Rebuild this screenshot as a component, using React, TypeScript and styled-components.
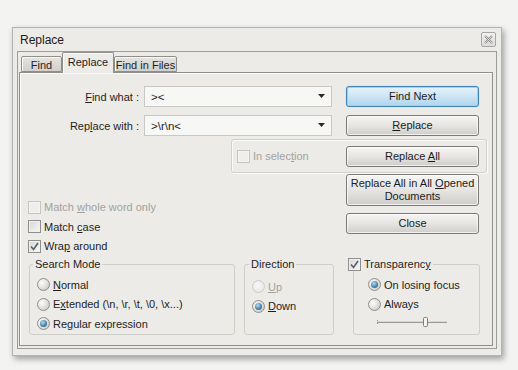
import React from "react";
import styled, { createGlobalStyle } from "styled-components";

const Global = createGlobalStyle`
  html, body { margin: 0; padding: 0; background: #f3f3f2; }
  body { font-family: "Liberation Sans", Arial, sans-serif; font-size: 11px; color: #1e1e1e; }
  * { box-sizing: border-box; }
  u { text-decoration-thickness: 1px; text-underline-offset: 1px; }
`;

const Page = styled.div`
  width: 518px;
  height: 370px;
  padding: 27px 0 0 12px;
  overflow: hidden;
`;

const Window = styled.div`
  width: 490px;
  height: 329px;
  background: #ecebe7;
  border: 1px solid #b5b4b0;
  box-shadow: 2px 3px 6px rgba(0, 0, 0, 0.35);
  display: flex;
  flex-direction: column;
`;

const TitleBar = styled.div`
  height: 23px;
  display: flex;
  align-items: center;
  justify-content: space-between;
  padding: 0 5px 0 7px;
  font-size: 12px;
  color: #1a1a1a;
`;

const CloseBtn = styled.div`
  width: 15px;
  height: 15px;
  border: 1px solid #a6a6a6;
  border-radius: 2px;
  background: linear-gradient(#f1f1f0, #dcdbd8);
  display: flex;
  align-items: center;
  justify-content: center;
`;

const ClientFrame = styled.div`
  flex: 1;
  margin: 0 4px 6px 4px;
  border: 1px solid #9d9c98;
  padding: 0 3px 2px 1px;
  display: flex;
  flex-direction: column;
`;

const TabRow = styled.div`
  height: 20px;
  display: flex;
  align-items: flex-end;
  padding-left: 2px;
`;

const Tab = styled.div<{ $active?: boolean; $w: number }>`
  width: ${(p) => p.$w}px;
  height: ${(p) => (p.$active ? 21 : 16)}px;
  margin-bottom: ${(p) => (p.$active ? -1 : 0)}px;
  position: relative;
  z-index: ${(p) => (p.$active ? 2 : 1)};
  border: 1px solid #8f8e8b;
  border-bottom: ${(p) => (p.$active ? "none" : "1px solid #8f8e8b")};
  border-radius: 2px 2px 0 0;
  background: ${(p) =>
    p.$active ? "#ecebe7" : "linear-gradient(#e4e3e0, #d2d0cc)"};
  box-shadow: inset 1px 1px 0 #fafaf9;
  display: flex;
  align-items: center;
  justify-content: center;
  padding-bottom: ${(p) => (p.$active ? 2 : 0)}px;
  padding-top: ${(p) => (p.$active ? 0 : 1)}px;
  font-size: 11px;
`;

const Panel = styled.div`
  height: 274px;
  border: 1px solid #8f8e8b;
  box-shadow: inset 1px 1px 0 #fbfbfa;
  background: #ecebe7;
  padding-top: 13px;
  display: flex;
  flex-direction: column;
`;

const FieldRow = styled.div<{ $mt?: number }>`
  display: flex;
  align-items: center;
  height: 21px;
  margin-top: ${(p) => p.$mt ?? 0}px;
`;

const FieldLabel = styled.div`
  width: 119px;
  text-align: right;
  margin-right: 5px;
  white-space: nowrap;
`;

const Combo = styled.div`
  width: 188px;
  height: 21px;
  border: 1px solid #c9c8c4;
  background: #f7f7f5;
  display: flex;
  align-items: center;
  justify-content: space-between;
  padding: 0 5px 0 6px;
  font-size: 11.5px;
`;

const Button = styled.div<{ $default?: boolean; $h?: number; $mt?: number }>`
  width: 133px;
  height: ${(p) => p.$h ?? 21}px;
  margin-top: ${(p) => p.$mt ?? 0}px;
  flex-shrink: 0;
  border: 1px solid ${(p) => (p.$default ? "#3f84b6" : "#7b7a77")};
  border-radius: 3px;
  background: ${(p) =>
    p.$default
      ? "linear-gradient(#e6f2fa 0%, #cde5f4 50%, #aed4ec 100%)"
      : "linear-gradient(#f5f5f4 0%, #e6e5e2 50%, #cfcdc9 100%)"};
  box-shadow: ${(p) =>
    p.$default
      ? "inset 0 0 0 1px #9fd2f0, 0 0 1px #7fc3ec"
      : "inset 0 0 0 1px rgba(255,255,255,0.7)"};
  display: flex;
  align-items: center;
  justify-content: center;
  text-align: center;
  line-height: 13px;
  color: #1c1c1c;
`;

const ButtonSlot = styled.div`
  margin-left: 14px;
`;

const SelectionBox = styled.div`
  margin: 3px 0 0 211px;
  width: 256px;
  height: 34px;
  border: 1px solid #d2d0cb;
  border-radius: 3px;
  box-shadow: inset 1px 1px 0 #fafaf9, 1px 1px 0 #fafaf9;
  display: flex;
  align-items: center;
  justify-content: space-between;
  padding: 0 7px 0 5px;
`;

const Lower = styled.div`
  display: flex;
  justify-content: space-between;
  padding-right: 13px;
`;

const LeftChecks = styled.div`
  padding: 24px 0 0 8px;
  display: flex;
  flex-direction: column;
`;

const RightButtons = styled.div`
  display: flex;
  flex-direction: column;
`;

const CheckRow = styled.div<{ $disabled?: boolean; $h?: number }>`
  display: flex;
  align-items: center;
  height: ${(p) => p.$h ?? 19}px;
  gap: 3px;
  white-space: nowrap;
  color: ${(p) => (p.$disabled ? "#a3a29f" : "#1e1e1e")};
`;

const Box = styled.span<{ $disabled?: boolean }>`
  width: 13px;
  height: 13px;
  flex-shrink: 0;
  border: 1px solid ${(p) => (p.$disabled ? "#c6c5c2" : "#8e8f8f")};
  background: ${(p) =>
    p.$disabled ? "#efeeeb" : "linear-gradient(135deg, #d7d6d3, #f8f8f7)"};
  box-shadow: inset 0 0 0 1px ${(p) => (p.$disabled ? "#f4f3f1" : "#f1f0ee")};
  display: flex;
  align-items: center;
  justify-content: center;
`;

const Circle = styled.span<{ $disabled?: boolean }>`
  width: 13px;
  height: 13px;
  flex-shrink: 0;
  border-radius: 50%;
  border: 1px solid ${(p) => (p.$disabled ? "#cdccc9" : "#8f8f8e")};
  background: ${(p) =>
    p.$disabled
      ? "radial-gradient(circle at 40% 40%, #f8f8f7, #e3e2df)"
      : "radial-gradient(circle at 35% 35%, #ffffff, #d5d4d1 70%, #bdbcb9)"};
  display: flex;
  align-items: center;
  justify-content: center;
`;

const Dot = styled.span`
  width: 7px;
  height: 7px;
  border-radius: 50%;
  background: radial-gradient(circle at 40% 35%, #bcdcef, #3f7fa8 60%, #2b5d80);
`;

const Groups = styled.div`
  display: flex;
  margin-top: 2px;
  padding-left: 9px;
  align-items: flex-start;
`;

const Group = styled.fieldset<{ $w: number; $ml?: number; $pl: number; $pt: number }>`
  width: ${(p) => p.$w}px;
  height: 77px;
  margin: 0 0 0 ${(p) => p.$ml ?? 0}px;
  padding: ${(p) => p.$pt}px 0 0 ${(p) => p.$pl}px;
  border: 1px solid #d0cec9;
  border-radius: 3px;
  min-width: 0;
  display: flex;
  flex-direction: column;
`;

const Legend = styled.legend<{ $ml?: number }>`
  padding: 0 2px;
  margin-left: ${(p) => p.$ml ?? 0}px;
  line-height: 13px;
  font-size: 11px;
  display: flex;
  align-items: center;
  gap: 3px;
`;

const RadioRow = styled.div<{ $disabled?: boolean }>`
  display: flex;
  align-items: center;
  height: 19.5px;
  gap: 3px;
  white-space: nowrap;
  color: ${(p) => (p.$disabled ? "#a3a29f" : "#1e1e1e")};
`;

const SliderWrap = styled.div`
  margin: 2px 0 0 9px;
  height: 12px;
  display: flex;
  align-items: center;
`;

function Check({ label, checked, disabled, h }: { label: React.ReactNode; checked?: boolean; disabled?: boolean; h?: number }) {
  return (
    <CheckRow $disabled={disabled} $h={h}>
      <Box $disabled={disabled}>
        {checked && (
          <svg width="11" height="11" viewBox="0 0 11 11">
            <path d="M2 5.5 L4.5 8.5 L9 2" fill="none" stroke="#55606b" strokeWidth="1.6" />
          </svg>
        )}
      </Box>
      <span>{label}</span>
    </CheckRow>
  );
}

function Radio({ label, selected, disabled }: { label: React.ReactNode; selected?: boolean; disabled?: boolean }) {
  return (
    <RadioRow $disabled={disabled}>
      <Circle $disabled={disabled}>{selected && <Dot />}</Circle>
      <span>{label}</span>
    </RadioRow>
  );
}

const Arrow = () => (
  <svg width="8" height="5" viewBox="0 0 8 5">
    <path d="M0 0 H7 L3.5 4 Z" fill="#2a2a2a" />
  </svg>
);

export default function App() {
  return (
    <>
      <Global />
      <Page>
        <Window>
          <TitleBar>
            <span>Replace</span>
            <CloseBtn>
              <svg width="9" height="9" viewBox="0 0 9 9">
                <path d="M1 1 L8 8 M8 1 L1 8" stroke="#8d8c89" strokeWidth="2" />
                <path d="M1 1 L8 8 M8 1 L1 8" stroke="#f0f0ef" strokeWidth="0.7" />
              </svg>
            </CloseBtn>
          </TitleBar>
          <ClientFrame>
            <TabRow>
              <Tab $w={41}>Find</Tab>
              <Tab $w={52} $active>Replace</Tab>
              <Tab $w={63}>Find in Files</Tab>
            </TabRow>
            <Panel>
              <FieldRow>
                <FieldLabel><u>F</u>ind what :</FieldLabel>
                <Combo>
                  <span>&gt;&lt;</span>
                  <Arrow />
                </Combo>
                <ButtonSlot>
                  <Button $default>Find Next</Button>
                </ButtonSlot>
              </FieldRow>
              <FieldRow $mt={8}>
                <FieldLabel>Rep<u>l</u>ace with :</FieldLabel>
                <Combo>
                  <span>&gt;\r\n&lt;</span>
                  <Arrow />
                </Combo>
                <ButtonSlot>
                  <Button><span><u>R</u>eplace</span></Button>
                </ButtonSlot>
              </FieldRow>
              <SelectionBox>
                <Check disabled label={<>In selec<u>t</u>ion</>} />
                <Button><span>Replace <u>A</u>ll</span></Button>
              </SelectionBox>
              <Lower>
                <LeftChecks>
                  <Check disabled label={<>Match <u>w</u>hole word only</>} h={20} />
                  <Check label={<>Match <u>c</u>ase</>} h={19} />
                  <Check checked label={<>Wra<u>p</u> around</>} h={20} />
                </LeftChecks>
                <RightButtons>
                  <Button $h={32} $mt={1}>
                    <span>Replace All in All <u>O</u>pened<br />Documents</span>
                  </Button>
                  <Button $mt={7}>Close</Button>
                </RightButtons>
              </Lower>
              <Groups>
                <Group $w={206} $pl={7} $pt={4}>
                  <Legend $ml={-4}>Search Mode</Legend>
                  <Radio label={<><u>N</u>ormal</>} />
                  <Radio label={<>E<u>x</u>tended (\n, \r, \t, \0, \x...)</>} />
                  <Radio selected label={<>Re<u>g</u>ular expression</>} />
                </Group>
                <Group $w={90} $ml={9} $pl={7} $pt={6}>
                  <Legend $ml={-3}>Direction</Legend>
                  <Radio disabled label={<><u>U</u>p</>} />
                  <Radio selected label={<><u>D</u>own</>} />
                </Group>
                <Group $w={127} $ml={19} $pl={14} $pt={4}>
                  <Legend $ml={-22}>
                    <Box>
                      <svg width="11" height="11" viewBox="0 0 11 11">
                        <path d="M2 5.5 L4.5 8.5 L9 2" fill="none" stroke="#55606b" strokeWidth="1.6" />
                      </svg>
                    </Box>
                    <span>Transparenc<u>y</u></span>
                  </Legend>
                  <Radio selected label="On losing focus" />
                  <Radio label="Always" />
                  <SliderWrap>
                    <svg width="72" height="12" viewBox="0 0 72 12">
                      <path d="M0.5 4 V8" stroke="#9a9996" strokeWidth="1" />
                      <path d="M0 6.5 H70" stroke="#9a9996" strokeWidth="1" />
                      <path d="M0 5.5 H70" stroke="#d8d7d4" strokeWidth="1" />
                      <rect x="46.5" y="1.5" width="4" height="9" rx="1" fill="#f4f4f3" stroke="#7e7d7a" />
                    </svg>
                  </SliderWrap>
                </Group>
              </Groups>
            </Panel>
          </ClientFrame>
        </Window>
      </Page>
    </>
  );
}
